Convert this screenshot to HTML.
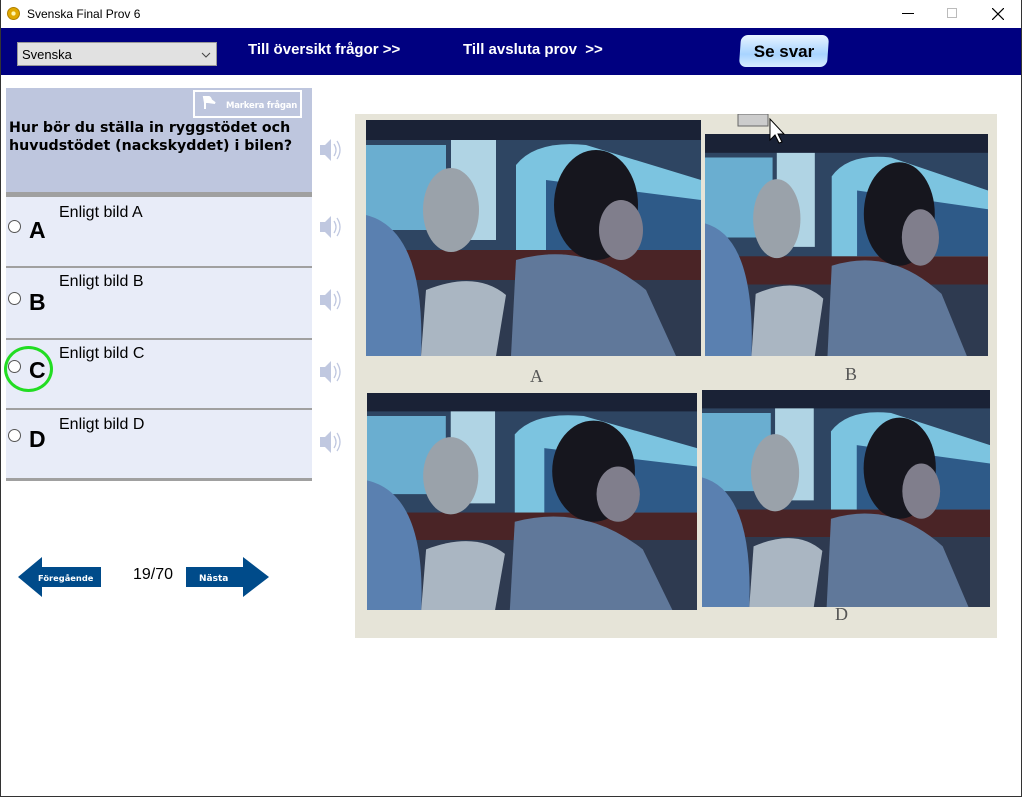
<!DOCTYPE html>
<html><head><meta charset="utf-8"><style>
*{margin:0;padding:0;box-sizing:border-box}
body{width:1022px;height:797px;position:relative;background:#fff;font-family:"Liberation Sans",Arial,sans-serif;overflow:hidden}
.abs{position:absolute}
.win{position:absolute;left:0;top:0;width:1022px;height:797px;border:1px solid #333;border-top:none;pointer-events:none}
.title{top:0;left:0;width:1022px;height:28px;background:#fff;font-size:12px}
.nav{top:28px;left:0;width:1022px;height:47px;background:#000080}
.navlink{color:#fff;font-weight:bold;font-size:15px;top:41px;white-space:nowrap}
.q{left:6px;top:88px;width:306px;height:104px;background:#bec6de}
.sep{left:6px;width:306px;background:#a0a0a0}
.opt{left:6px;width:306px;background:#e8ecf8}
.radio{width:13px;height:13px;border-radius:50%;border:1px solid #555;background:#fff;left:8px}
.let{font-weight:bold;font-size:23px;left:29px;color:#000}
.otext{font-size:16px;left:59px;color:#000}
</style></head><body>
<div class="abs title">
  <div class="abs" style="left:7px;top:7px;width:13px;height:13px;border-radius:50%;background:radial-gradient(circle,#fff6b0 0 25%,#e0a800 30% 100%);border:1px solid #b08000"></div>
  <div class="abs" style="left:27px;top:7px;font-size:12px;color:#000">Svenska Final Prov 6</div>
  <div class="abs" style="left:902px;top:13px;width:12px;height:1px;background:#000"></div>
  <div class="abs" style="left:947px;top:8px;width:10px;height:10px;border:1px solid #bbb"></div>
  <svg class="abs" style="left:992px;top:8px" width="12" height="12"><path d="M0 0L12 12M12 0L0 12" stroke="#000" stroke-width="1.2"/></svg>
</div>
<div class="abs nav"></div>
<div class="abs" style="left:17px;top:42px;width:200px;height:24px;background:#e1e1e1;border:1px solid #999;font-size:13px;padding:4px 0 0 4px">Svenska
 <svg class="abs" style="right:5px;top:9px" width="10" height="6"><path d="M1 1L5 5L9 1" stroke="#444" fill="none"/></svg></div>
<div class="abs navlink" style="left:248px">Till översikt frågor &gt;&gt;</div>
<div class="abs navlink" style="left:463px">Till avsluta prov &nbsp;&gt;&gt;</div>
<div class="abs" style="left:740px;top:35px;width:88px;height:32px;border-radius:7px;background:linear-gradient(#e8f4ff,#a8d4ff 60%,#d8ecff);transform:skewX(-4deg)"></div>
<div class="abs" style="left:740px;top:35px;width:88px;height:32px;font-weight:bold;font-size:17px;text-align:center;line-height:33px">Se svar</div>

<div class="abs q">
  <div class="abs" style="left:187px;top:2px;width:109px;height:28px;border:2px solid #fff;color:#fff;font-family:'DejaVu Sans',sans-serif;font-weight:bold;font-size:8.5px;padding:9px 0 0 31px;white-space:nowrap;letter-spacing:-0.2px">Markera frågan</div>
  <svg class="abs" style="left:196px;top:8px" width="16" height="14"><path d="M1 1Q8 -1 9 4L13 7L6 6L3 6L3 13" stroke="#fff" stroke-width="2" fill="#fff"/></svg>
  <div class="abs" style="left:3px;top:31px;font-family:'DejaVu Sans',Verdana,sans-serif;font-weight:bold;font-size:14.2px;line-height:18px;color:#000;white-space:nowrap">Hur bör du ställa in ryggstödet och<br>huvudstödet (nackskyddet) i bilen?</div>
</div>
<div class="abs sep" style="top:192px;height:5px"></div>
<div class="abs opt" style="top:197px;height:69px"></div>
<div class="abs sep" style="top:266px;height:2px"></div>
<div class="abs opt" style="top:268px;height:70px"></div>
<div class="abs sep" style="top:338px;height:2px"></div>
<div class="abs opt" style="top:340px;height:69px"></div>
<div class="abs sep" style="top:408px;height:2px"></div>
<div class="abs opt" style="top:410px;height:68px"></div>
<div class="abs sep" style="top:478px;height:3px"></div>

<div class="abs radio" style="top:220px"></div><div class="abs let" style="top:217px">A</div><div class="abs otext" style="top:204px">Enligt bild A</div>
<div class="abs radio" style="top:292px"></div><div class="abs let" style="top:289px">B</div><div class="abs otext" style="top:273px">Enligt bild B</div>
<div class="abs radio" style="top:360px"></div><div class="abs let" style="top:357px">C</div><div class="abs otext" style="top:345px">Enligt bild C</div>
<div class="abs" style="left:4px;top:346px;width:49px;height:46px;border:3px solid #22dd22;border-radius:50%"></div>
<div class="abs radio" style="top:429px"></div><div class="abs let" style="top:426px">D</div><div class="abs otext" style="top:416px">Enligt bild D</div>

<svg width="0" height="0" style="position:absolute"><defs><g id="spk"><path d="M0 6H5L11 0V22L5 16H0Z" fill="#c0c8e0"/><path d="M14 5Q18 11 14 17M17 2Q23 11 17 20" stroke="#c0c8e0" stroke-width="1.3" fill="none"/></g></defs></svg>
<svg class="abs" style="left:320px;top:139px" width="24" height="24"><use href="#spk"/></svg>
<svg class="abs" style="left:320px;top:216px" width="24" height="24"><use href="#spk"/></svg>
<svg class="abs" style="left:320px;top:289px" width="24" height="24"><use href="#spk"/></svg>
<svg class="abs" style="left:320px;top:361px" width="24" height="24"><use href="#spk"/></svg>
<svg class="abs" style="left:320px;top:431px" width="24" height="24"><use href="#spk"/></svg>

<svg class="abs" style="left:18px;top:557px" width="84" height="40"><path d="M0 20L24 0V10H83V30H24V40Z" fill="#004b8a"/><text x="20" y="24" font-family="DejaVu Sans,sans-serif" font-weight="bold" font-size="8.3" fill="#fff">Föregående</text></svg>
<div class="abs" style="left:133px;top:566px;font-size:16px">19/70</div>
<svg class="abs" style="left:186px;top:557px" width="84" height="40"><path d="M0 10H57V0L83 20L57 40V30H0Z" fill="#004b8a"/><text x="13" y="24" font-family="DejaVu Sans,sans-serif" font-weight="bold" font-size="9" fill="#fff">Nästa</text></svg>

<svg class="abs" style="left:355px;top:114px" width="642" height="524">
<defs>
<g id="pan">
  <rect width="335" height="236" fill="#2e4562"/>
  <rect width="335" height="20" fill="#1a2236"/>
  <path d="M0 25H80V110H0Z" fill="#6aaed0"/>
  <path d="M85 20H130V120H85Z" fill="#b0d4e4"/>
  <path d="M150 45Q170 20 220 25L335 60V140H150Z" fill="#7cc4e0"/>
  <path d="M180 60L335 80V130H180Z" fill="#2e5a88"/>
  <rect y="130" width="335" height="30" fill="#4a2426"/>
  <rect y="160" width="335" height="76" fill="#2e3a50"/>
  <path d="M0 95Q60 110 55 236H0Z" fill="#5a80b0"/>
  <ellipse cx="85" cy="90" rx="28" ry="42" fill="#9aa2aa"/>
  <path d="M60 170Q110 150 140 175L130 236H55Z" fill="#aab6c2"/>
  <path d="M150 140Q220 120 280 170L310 236H145Z" fill="#60789a"/>
  <ellipse cx="230" cy="85" rx="42" ry="55" fill="#16161e"/>
  <ellipse cx="255" cy="110" rx="22" ry="30" fill="#807e8c"/>
</g>
</defs>
<rect width="642" height="524" fill="#e6e4d8"/>
<svg x="11" y="6" width="335" height="236"><use href="#pan"/></svg>
<svg x="350" y="20" width="283" height="222" viewBox="0 0 335 236" preserveAspectRatio="none"><use href="#pan"/></svg>
<svg x="12" y="279" width="330" height="217" viewBox="0 0 335 236" preserveAspectRatio="none"><use href="#pan"/></svg>
<svg x="347" y="276" width="288" height="217" viewBox="0 0 335 236" preserveAspectRatio="none"><use href="#pan"/></svg>
<text x="175" y="268" font-family="Liberation Serif,serif" font-size="18" fill="#555">A</text>
<text x="490" y="266" font-family="Liberation Serif,serif" font-size="18" fill="#555">B</text>
<text x="480" y="506" font-family="Liberation Serif,serif" font-size="18" fill="#555">D</text>
<rect x="383" y="0" width="30" height="12" fill="#ccc" stroke="#666"/>
<path d="M415 5V26L420 21L424 29L427 28L423 20H429Z" fill="#fff" stroke="#000"/>
</svg>
<div class="win"></div>
</body></html>
